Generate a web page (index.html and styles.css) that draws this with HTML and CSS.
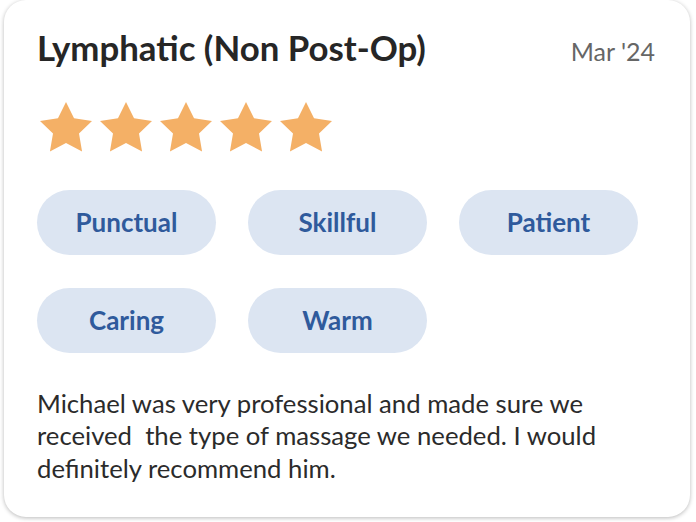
FILE: index.html
```html
<!DOCTYPE html>
<html>
<head>
<meta charset="utf-8">
<link rel="stylesheet" href="styles.css">
</head>
<body>
<div class="card">
  <div class="header">
    <h1 class="title">Lymphatic (Non Post-Op)</h1>
    <span class="date">Mar '24</span>
  </div>
  <div class="stars">
    <svg class="star" viewBox="2 2 20 19.02"><polygon points="12,2 15.09,8.26 22,9.27 17,14.14 18.18,21.02 12,17.77 5.82,21.02 7,14.14 2,9.27 8.91,8.26"/></svg>
    <svg class="star" viewBox="2 2 20 19.02"><polygon points="12,2 15.09,8.26 22,9.27 17,14.14 18.18,21.02 12,17.77 5.82,21.02 7,14.14 2,9.27 8.91,8.26"/></svg>
    <svg class="star" viewBox="2 2 20 19.02"><polygon points="12,2 15.09,8.26 22,9.27 17,14.14 18.18,21.02 12,17.77 5.82,21.02 7,14.14 2,9.27 8.91,8.26"/></svg>
    <svg class="star" viewBox="2 2 20 19.02"><polygon points="12,2 15.09,8.26 22,9.27 17,14.14 18.18,21.02 12,17.77 5.82,21.02 7,14.14 2,9.27 8.91,8.26"/></svg>
    <svg class="star" viewBox="2 2 20 19.02"><polygon points="12,2 15.09,8.26 22,9.27 17,14.14 18.18,21.02 12,17.77 5.82,21.02 7,14.14 2,9.27 8.91,8.26"/></svg>
  </div>
  <div class="chips">
    <span class="chip">Punctual</span>
    <span class="chip">Skillful</span>
    <span class="chip">Patient</span>
    <span class="chip">Caring</span>
    <span class="chip">Warm</span>
  </div>
  <p class="review">Michael was very professional and made sure we received&nbsp; the type of massage we needed. I would definitely recommend him.</p>
</div>
</body>
</html>
```
FILE: styles.css
```css
html, body {
  margin: 0;
  padding: 0;
  background: #ffffff;
}
body {
  width: 696px;
  height: 522px;
  overflow: hidden;
  font-family: "Lato", "Noto Sans", sans-serif;
}
.card {
  box-sizing: border-box;
  margin: 0 6px 0 4px;
  height: 517px;
  background: #ffffff;
  border-radius: 22px;
  box-shadow: 0 1px 4px rgba(0, 0, 0, 0.28);
  padding: 28px 35px 0 33px;
}
.header {
  display: flex;
  justify-content: space-between;
  align-items: baseline;
}
.title {
  margin: 0;
  font-size: 34.8px;
  font-weight: 700;
  color: #262626;
  line-height: 40px;
}
.date {
  font-size: 25px;
  color: #666666;
}
.stars {
  display: flex;
  gap: 8px;
  margin-top: 34px;
  padding-left: 3px;
}
.star {
  width: 52px;
  height: 49.5px;
  fill: #f4b066;
}
.chips {
  display: grid;
  grid-template-columns: repeat(3, 179px);
  column-gap: 32px;
  row-gap: 33px;
  margin-top: 38px;
}
.chip {
  height: 65px;
  border-radius: 33px;
  background: #dce5f2;
  color: #2f5a9c;
  font-size: 26px;
  font-weight: 700;
  display: flex;
  align-items: center;
  justify-content: center;
}
.review {
  margin: 34px 0 0 0;
  font-size: 25.7px;
  line-height: 32.5px;
  color: #2b2b2b;
  width: 580px;
}
```
